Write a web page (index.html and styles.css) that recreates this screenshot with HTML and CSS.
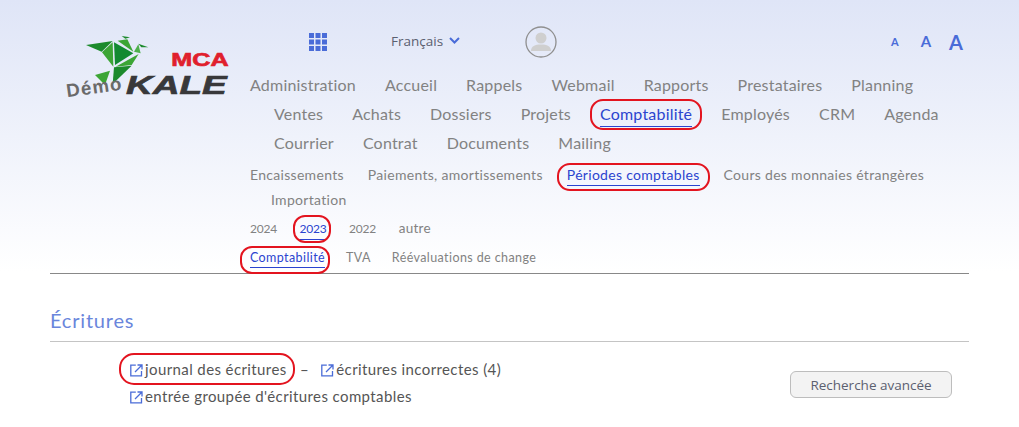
FILE: index.html
```html
<!DOCTYPE html>
<html lang="fr">
<head>
<meta charset="utf-8">
<title>Écritures</title>
<link rel="stylesheet" href="styles.css">
</head>
<body>
<header class="header">
  <a class="logo" href="#">
    <svg width="200" height="110" viewBox="0 0 600 330">
      <polygon points="108,105 188,93 155,125" fill="#1c8a2c"/>
      <polygon points="188,97 156,127 190,170" fill="#3ca535"/>
      <polygon points="192,97 250,130 195,165" fill="#128a30"/>
      <polygon points="203,92 232,88 250,125" fill="#3ca535"/>
      <polygon points="215,78 240,82 226,86" fill="#1c8a2c"/>
      <polygon points="252,125 265,103 272,130" fill="#4db04a"/>
      <polygon points="265,101 295,112 274,112" fill="#1c8a2c"/>
      <polygon points="197,170 266,132 245,165" fill="#3ca535"/>
      <polygon points="192,172 245,167 188,222" fill="#1c8a2c"/>
      <polygon points="135,195 180,182 165,225" fill="#3ca535"/>
      <text class="logo-mca" x="364" y="167" textLength="172" lengthAdjust="spacingAndGlyphs">MCA</text>
      <text class="logo-kale" x="228" y="252" textLength="302" lengthAdjust="spacingAndGlyphs">KALE</text>
      <text class="logo-demo" x="52" y="262" transform="rotate(-8 52 262)" textLength="166" lengthAdjust="spacing">Démo</text>
    </svg>
  </a>
  <div class="header-main">
    <div class="tools">
      <svg class="apps" width="18" height="18" viewBox="0 0 18 18">
        <rect x="0" y="0" width="5" height="5"/><rect x="6.5" y="0" width="5" height="5"/><rect x="13" y="0" width="5" height="5"/>
        <rect x="0" y="6.5" width="5" height="5"/><rect x="6.5" y="6.5" width="5" height="5"/><rect x="13" y="6.5" width="5" height="5"/>
        <rect x="0" y="13" width="5" height="5"/><rect x="6.5" y="13" width="5" height="5"/><rect x="13" y="13" width="5" height="5"/>
      </svg>
      <div class="lang">
        <span>Français</span>
        <svg width="11" height="7" viewBox="0 0 11 7"><path d="M1 1l4.500 4.500L10 1" fill="none" stroke="#4a6cd8" stroke-width="2"/></svg>
      </div>
      <svg class="avatar" width="32" height="32" viewBox="0 0 32 32">
        <circle cx="16" cy="16" r="15" fill="none" stroke="#8f8f8f" stroke-width="1.300"/>
        <circle cx="16" cy="12" r="5.500" fill="#cfcfcf"/>
        <path d="M6 25c0-5 4-6.500 10-6.500s10 1.500 10 6.500z" fill="#cfcfcf"/>
      </svg>
      <div class="sizes">
        <span class="size-s">A</span>
        <span class="size-m">A</span>
        <span class="size-l">A</span>
      </div>
    </div>
    <nav class="nav nav-main">
      <a href="#">Administration</a><a href="#">Accueil</a><a href="#">Rappels</a><a href="#">Webmail</a><a href="#">Rapports</a><a href="#">Prestataires</a><a href="#">Planning</a><a href="#">Ventes</a><a href="#">Achats</a><a href="#">Dossiers</a><a href="#">Projets</a><a class="active ring" href="#">Comptabilité</a><a href="#">Employés</a><a href="#">CRM</a><a href="#">Agenda</a><a href="#">Courrier</a><a href="#">Contrat</a><a href="#">Documents</a><a href="#">Mailing</a>
    </nav>
    <nav class="nav nav-sub">
      <a href="#">Encaissements</a><a href="#">Paiements, amortissements</a><a class="active ring" href="#">Périodes comptables</a><a href="#">Cours des monnaies étrangères</a><a href="#">Importation</a>
    </nav>
    <nav class="nav nav-years">
      <a href="#">2024</a><a class="active ring" href="#">2023</a><a href="#">2022</a><a class="other" href="#">autre</a>
    </nav>
    <nav class="nav nav-tabs">
      <a class="active ring" href="#">Comptabilité</a><a href="#">TVA</a><a href="#">Réévaluations de change</a>
    </nav>
  </div>
</header>
<main class="content">
  <h1 class="title">Écritures</h1>
  <div class="body-row">
    <ul class="links">
      <li>
        <a class="link ring" href="#"><svg class="ext" width="13" height="13" viewBox="0 0 13 13"><path d="M11.500 7v4.800H.8V1.200h5" fill="none" stroke="#4a6cd8" stroke-width="1.300"/><path d="M5 8L11.500 1.500M7.500 1H12v4.500" fill="none" stroke="#4a6cd8" stroke-width="1.300"/></svg>journal des écritures</a>
        <span class="dash">–</span>
        <a class="link" href="#"><svg class="ext" width="13" height="13" viewBox="0 0 13 13"><path d="M11.500 7v4.800H.8V1.200h5" fill="none" stroke="#4a6cd8" stroke-width="1.300"/><path d="M5 8L11.500 1.500M7.500 1H12v4.500" fill="none" stroke="#4a6cd8" stroke-width="1.300"/></svg>écritures incorrectes (4)</a>
      </li>
      <li>
        <a class="link" href="#"><svg class="ext" width="13" height="13" viewBox="0 0 13 13"><path d="M11.500 7v4.800H.8V1.200h5" fill="none" stroke="#4a6cd8" stroke-width="1.300"/><path d="M5 8L11.500 1.500M7.500 1H12v4.500" fill="none" stroke="#4a6cd8" stroke-width="1.300"/></svg>entrée groupée d'écritures comptables</a>
      </li>
    </ul>
    <button class="button" type="button">Recherche avancée</button>
  </div>
</main>
</body>
</html>
```
FILE: styles.css
```css
* { box-sizing: border-box; }
html, body { margin: 0; padding: 0; }
body {
  height: 427px;
  overflow: hidden;
  background: linear-gradient(#dfe5f7 0, #ffffff 272px) no-repeat;
  background-size: 100% 272px;
  background-color: #fff;
  font-family: "Lato", "Noto Sans", sans-serif;
  color: #555;
}
a { text-decoration: none; color: inherit; }

.header {
  display: flex;
  margin: 0 50px;
  height: 274px;
  border-bottom: 1px solid #888;
}
.logo { display: block; width: 200px; height: 110px; margin-top: 10px; flex: none; }
.logo svg { display: block; }
.logo-mca { font: 700 56px "Liberation Sans", sans-serif; fill: #e01f2d; stroke: #e01f2d; stroke-width: 2px; }
.logo-kale { font: italic 700 80px "Liberation Sans", sans-serif; fill: #38383a; stroke: #38383a; stroke-width: 2px; }
.logo-demo { font: 700 56px "Liberation Sans", sans-serif; fill: #6a6a6a; }

.header-main { flex: 1; min-width: 0; }

.tools {
  display: flex;
  align-items: center;
  height: 57px;
  padding-top: 26px;
  padding-left: 59px;
}
.apps { fill: #4a6cd8; flex: none; margin-right: 64px; }
.lang {
  display: flex;
  align-items: center;
  gap: 6px;
  width: 134px;
  margin-bottom: 2px;
  font: 13.500px "Open Sans", sans-serif;
  color: #5b6070;
}
.avatar { flex: none; }
.sizes {
  margin-left: auto;
  margin-right: 6px;
  display: flex;
  align-items: center;
  gap: 18px;
  color: #4a6cd8;
  font-weight: 700;
  line-height: 1;
}
.size-s { font-size: 11px; margin-right: 4px; }
.size-m { font-size: 15px; }
.size-l { font-size: 20px; }

.nav { color: #828282; }
.nav a { display: inline-block; position: relative; }
.nav .active { color: #2b44cf; }
.nav .active::before {
  content: "";
  position: absolute;
  left: 0;
  right: 0;
  border-bottom: 1.500px solid #2b44cf;
}
.ring::after {
  content: "";
  position: absolute;
  border: 2px solid #e3141f;
  border-radius: 13px;
}

.nav-main {
  padding-left: 24px;
  text-indent: -24px;
  margin-top: 13px;
  font-size: 16px;
  line-height: 29px;
  letter-spacing: 0.200px;
}
.nav-main a { text-indent: 0; margin-right: 29px; }
.nav-main .active::before { bottom: 1px; }
.nav-main .ring::after { inset: 0 -10px -2px -10px; }

.nav-sub {
  padding-left: 21px;
  text-indent: -21px;
  margin-top: 5px;
  font-size: 14px;
  line-height: 25px;
  letter-spacing: 0.300px;
}
.nav-sub a { text-indent: 0; margin-right: 24px; }
.nav-sub .active::before { bottom: 1.500px; }
.nav-sub .ring::after { inset: 1px -10px -4px -10px; }

.nav-years {
  margin-top: 2px;
  font-size: 12px;
  line-height: 29px;
  letter-spacing: -0.200px;
}
.nav-years a { margin-right: 22.500px; }
.nav-years .other { font-size: 13.500px; letter-spacing: 0.300px; }
.nav-years .active::before { bottom: 3px; }
.nav-years .ring::after { inset: 1px -4px 0 -7px; border-radius: 12px; }

.nav-tabs {
  font-size: 12.500px;
  line-height: 29px;
  letter-spacing: 0.400px;
}
.nav-tabs a { margin-right: 21px; }
.nav-tabs .active::before { bottom: 4px; }
.nav-tabs .ring::after { inset: 3px -5px -2px -10px; border-radius: 12px; }

.content { margin: 0 50px; }
.title {
  margin: 33px 0 0;
  height: 35px;
  border-bottom: 1px solid #c4c4c4;
  font-size: 20px;
  font-weight: 400;
  line-height: 26px;
  color: #6a86dc;
  letter-spacing: 0.800px;
}
.body-row {
  display: flex;
  justify-content: space-between;
  align-items: flex-start;
  padding: 14px 17px 0 80px;
}
.links {
  list-style: none;
  margin: 0;
  padding: 0;
  font-size: 15px;
  line-height: 27px;
  color: #555;
  letter-spacing: 0.400px;
}
.link { position: relative; display: inline-block; }
.link.ring::after { inset: -3px -8px -2px -11px; border-radius: 15px; }
.ext { vertical-align: -2px; margin-right: 2px; }
.dash { margin: 0 8px 0 9px; }
.button {
  width: 162px;
  height: 27px;
  margin-top: 15px;
  padding: 0;
  background: #f3f3f3;
  border: 1px solid #bdbdbd;
  border-radius: 6px;
  font: 13.500px "Open Sans", sans-serif;
  color: #5b6070;
}
```
